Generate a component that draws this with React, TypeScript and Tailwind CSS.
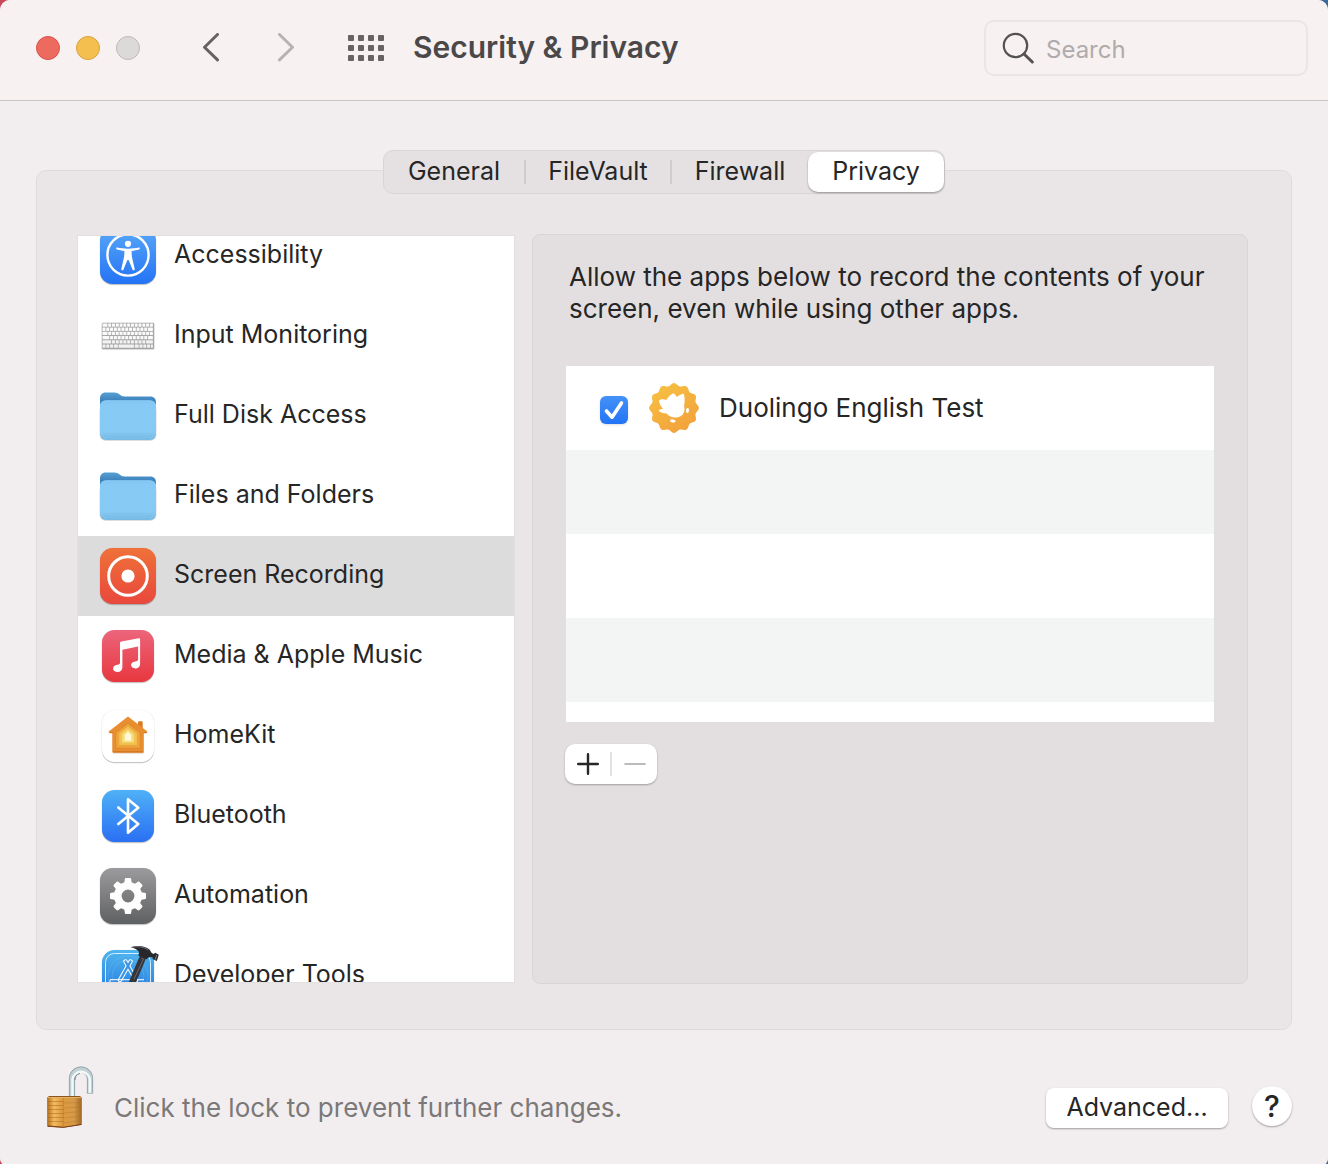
import { ReactNode, useState } from "react";

interface PrivacyItem {
  name: string;
  icon: ReactNode;
}

interface TileProps {
  id: string;
  from: string;
  to: string;
  size?: number;
  children?: ReactNode;
}

// Rounded app tile that most of the sidebar icons sit on
function Tile({ id, from, to, size = 56, children }: TileProps) {
  const offset = (60 - size) / 2;
  return (
    <svg viewBox="0 0 60 60" className="size-15 shrink-0 overflow-visible" aria-hidden="true">
      <defs>
        <linearGradient id={id} x1="0" y1="0" x2="0" y2="1">
          <stop offset="0" stopColor={from} />
          <stop offset="1" stopColor={to} />
        </linearGradient>
      </defs>
      <rect x={offset} y={offset + 1.2} width={size} height={size} rx="12.5" fill="#000" opacity="0.16" />
      <rect x={offset - 0.5} y={offset - 0.2} width={size + 1} height={size + 1} rx="13" fill="#000" opacity="0.09" />
      <rect x={offset} y={offset} width={size} height={size} rx="12.5" fill={`url(#${id})`} />
      {children}
    </svg>
  );
}

function AccessibilityIcon() {
  return (
    <Tile id="accessibility" from="#58a7f8" to="#2473f5">
      <circle cx="30" cy="29" r="20.6" fill="none" stroke="#fff" strokeWidth="2.4" />
      <circle cx="30" cy="17.8" r="3.1" fill="#fff" />
      <path
        d="M19.2 21.6c3 .6 6.400 1.100 10.800 1.100s7.800-.5 10.800-1.100c1.100-.2 1.500 1.600.3 1.900-2.500.7-4.600 1.100-7.400 1.500-.2 3.700.2 6.400 1 9.300l2 8.600c.3 1.500-1.700 2-2.200.6L30.600 34h-1.200l-3.900 9.500c-.5 1.400-2.500.9-2.200-.6l2-8.600c.8-2.900 1.200-5.600 1-9.300-2.800-.4-4.900-.8-7.400-1.500-1.200-.3-.8-2.100.3-1.900z"
        fill="#fff"
      />
    </Tile>
  );
}

const keyRows = [
  [3, 2, 2, 2, 2, 2, 2, 2, 2, 2, 2, 2, 2],
  [2, 2, 2, 2, 2, 2, 2, 2, 2, 2, 2, 2, 3],
  [3, 2, 2, 2, 2, 2, 2, 2, 2, 2, 2, 2, 2],
  [4, 2, 2, 2, 2, 2, 2, 2, 2, 2, 2, 3],
  [5, 2, 2, 2, 2, 2, 2, 2, 2, 2, 4],
  [2, 2, 2, 2.5, 8.5, 2.5, 2, 2, 2, 1.5],
];

function KeyboardIcon() {
  return (
    <svg viewBox="0 0 60 60" className="size-15 shrink-0" aria-hidden="true">
      <rect x="3.5" y="16.5" width="53" height="27.3" rx="1.5" fill="#cfcfcf" />
      <rect x="4" y="17" width="52" height="26" rx="1" fill="#a6a6a6" />
      {keyRows.map((row, r) => {
        const total = row.reduce((sum, w) => sum + w, 0);
        let used = 0;
        return row.map((w, i) => {
          const x = 4.5 + (used / total) * 51.2;
          used += w;
          return (
            <rect
              key={`${r}-${i}`}
              x={x}
              y={17.4 + r * 4.2}
              width={(w / total) * 51.2 - 0.8}
              height="3.3"
              rx="0.4"
              fill={r > 3 ? "#f1f1f1" : "#fafafa"}
            />
          );
        });
      })}
    </svg>
  );
}

function FolderIcon({ id }: { id: string }) {
  return (
    <svg viewBox="0 0 60 60" className="size-15 shrink-0" aria-hidden="true">
      <defs>
        <linearGradient id={`${id}-back`} x1="0" y1="0" x2="0" y2="1">
          <stop offset="0" stopColor="#569fd2" />
          <stop offset="0.25" stopColor="#3d82bd" />
        </linearGradient>
        <linearGradient id={`${id}-front`} x1="0" y1="0" x2="0" y2="1">
          <stop offset="0" stopColor="#7fc4f0" />
          <stop offset="0.12" stopColor="#87caf5" />
          <stop offset="0.8" stopColor="#86c9f3" />
          <stop offset="1" stopColor="#76b9e4" />
        </linearGradient>
      </defs>
      <rect x="1.6" y="18" width="56.8" height="36.8" rx="6" fill="#000" opacity="0.18" />
      <path d="M2 12.5C2 9 4 6.600 7.500 6.600h8.700c2.600 0 4 .9 5.400 2 1.500 1.300 2.700 2 5 2h25.900c3.500 0 5.500 2.400 5.500 5.900V40H2z" fill={`url(#${id}-back)`} />
      <rect x="2" y="14.5" width="56" height="39.5" rx="6" fill={`url(#${id}-front)`} />
      <path d="M2.500 20c0-3.200 2.200-5.200 5.500-5.200h44c3.300 0 5.500 2 5.500 5.200" fill="none" stroke="#a0d7fa" strokeWidth="0.7" />
      <path d="M5 47.500h50M5 49.700h50" stroke="#7cbbe6" strokeWidth="0.5" />
    </svg>
  );
}

function RecordingIcon() {
  return (
    <Tile id="recording" from="#ef7139" to="#e9483c">
      <circle cx="30" cy="30" r="19.3" fill="none" stroke="#fff" strokeWidth="3" />
      <circle cx="30" cy="30" r="6.600" fill="#fff" />
    </Tile>
  );
}

function MusicIcon() {
  return (
    <Tile id="music" from="#ec657b" to="#e8373f" size={52}>
      <path
        d="M22 17.200c0-.9.5-1.400 1.300-1.600l17.500-3.300c.8-.1 1.300.3 1.300 1.100v24.300c0 3.200-2 4.700-4.700 4.700-2.500 0-4.300-1.300-4.300-3.300 0-2.100 1.600-3.200 4.100-3.700 2.100-.4 2.900-.8 2.900-2.200V20.500l-15.700 3.200v17.300c0 3.300-2.100 5-4.900 5-2.500 0-4.400-1.400-4.400-3.500 0-2.200 1.600-3.300 4.200-3.800 2.200-.4 2.700-.8 2.700-2.300z"
        fill="#fff"
      />
    </Tile>
  );
}

function HomeIcon() {
  return (
    <Tile id="home" from="#ffffff" to="#ffffff" size={52}>
      <g strokeLinejoin="round">
        <path d="M14.700 27v20.500h31V27z" fill="#8a5a2a" opacity="0.35" />
        <path d="M40 23v-6.500c0-.8.4-1.200 1.200-1.200h2.300c.8 0 1.200.4 1.200 1.200V25z" fill="#d97c24" />
        <path d="M29 11.200c.7-.6 1.300-.6 2 0L49 25.300c.7.800.2 1.700-.8 1.700h-2.500v18.500c0 .8-.4 1.200-1.200 1.200h-29c-.8 0-1.200-.4-1.200-1.200V27h-2.500c-1 0-1.500-.9-.8-1.700z" fill="#e98d31" />
        <path d="M15 45.800h30M11.500 26.800h3.200M45.500 26.800h3.200" stroke="#c96c1d" strokeWidth="0.8" />
        <path d="M30 17.300l12.300 9.500v15.500H17.700V26.800z" fill="#efa43b" stroke="#d98428" strokeWidth="0.7" />
        <path d="M30 19.800l9.300 7.500v12H20.700v-12z" fill="#f5c04e" stroke="#e3a03a" strokeWidth="0.7" />
        <path d="M30 22.800l6.200 5.200v9H23.800v-9z" fill="#f8dd7c" stroke="#e9bd54" strokeWidth="0.6" />
        <path d="M30 25.800l3.200 3v6h-6.400v-6z" fill="#fff9d9" />
      </g>
    </Tile>
  );
}

function BluetoothIcon() {
  return (
    <Tile id="bluetooth" from="#4fb1f6" to="#2a6ff3" size={52}>
      <path
        d="M20.300 21.500L40.300 38 30 46.700V13.300l10.300 8.400L20.300 38"
        fill="none"
        stroke="#fff"
        strokeWidth="2.6"
        strokeLinecap="round"
        strokeLinejoin="round"
      />
    </Tile>
  );
}

function GearIcon() {
  return (
    <Tile id="gear" from="#9b9b9d" to="#5f6062">
      {[0, 45, 90, 135, 180, 225, 270, 315].map((angle) => (
        <path
          key={angle}
          d="M24.500 18.500c1.300-.7 1.800-1.500 2-3l.3-2.200c.1-.9.600-1.300 1.400-1.300h3.600c.8 0 1.300.4 1.400 1.300l.3 2.200c.2 1.500.7 2.300 2 3z"
          fill="#fff"
          transform={`rotate(${angle} 30 30)`}
        />
      ))}
      <circle cx="30" cy="30" r="10.2" fill="none" stroke="#fff" strokeWidth="7.6" />
    </Tile>
  );
}

function ToolsIcon() {
  return (
    <Tile id="tools" from="#4fb5ee" to="#2072df" size={52}>
      <rect x="7.5" y="7.5" width="45" height="45" rx="9" fill="none" stroke="#d6efff" strokeWidth="1" />
      <g fill="none" stroke="#7cc8f6" strokeWidth="0.5" opacity="0.6">
        <circle cx="30" cy="30" r="20" />
        <circle cx="30" cy="30" r="16" />
      </g>
      <g fill="none" strokeLinecap="round">
        <path d="M32.500 15.500L22 34M27.500 15.500L38 34" stroke="#fff" strokeWidth="4.400" />
        <path d="M32.500 15.500L22 34M27.500 15.500L38 34" stroke="#3b96e6" strokeWidth="2.400" />
      </g>
      <path d="M12 38v-4.300h34" fill="none" stroke="#fff" strokeWidth="1" />
      <path d="M42 9.500l6 2.800L36.500 40 30 38z" fill="#343439" />
      <path d="M43.500 12l2 1L36 33" fill="none" stroke="#6d6d73" strokeWidth="0.9" />
      <path d="M32.700 1.200C40-1.200 47-.2 51.500 3.500l2.200 3.600 2 .8 1.500-1.200 3.600 2-2 6.300-3.900-1.700-.5-2-3.200-.2-2.700 2.200-8-3.500.5-3.800c-1.600-2.700-4.500-4.100-8.300-4.800z" fill="#27272c" />
      <path d="M34.500 1.300c6-1.300 11.800-.3 15.800 2.900" fill="none" stroke="#77777e" strokeWidth="0.9" />
      <path d="M58.700 9l-1.600 4.700" stroke="#8c8c96" strokeWidth="0.9" />
    </Tile>
  );
}

// Twelve-point scalloped outline of the app badge
const badgePoints = Array.from({ length: 180 }, (_, i) => {
  const angle = (i * Math.PI) / 90;
  const radius = 23.6 + 1.3 * Math.cos(angle * 12);
  return `${(25 + radius * Math.sin(angle)).toFixed(2)},${(25 - radius * Math.cos(angle)).toFixed(2)}`;
}).join(" ");

function DuolingoIcon() {
  return (
    <svg viewBox="0 0 50 50" className="size-[50px] shrink-0" aria-hidden="true">
      <defs>
        <linearGradient id="duolingo" x1="0.2" y1="0" x2="0.8" y2="1">
          <stop offset="0" stopColor="#f7c043" />
          <stop offset="1" stopColor="#f2a03b" />
        </linearGradient>
      </defs>
      <polygon points={badgePoints} fill="url(#duolingo)" />
      <path
        d="M11 16.700c2.300-.6 4.300-.5 6.300.2 1.600-2.500 3.600-4.800 6-6.200.9-.5 1.700-.4 2.400.3.900.9 1.600 1.900 2.100 3.100 1.600-1.400 3.400-2.500 5.500-3.200 1-.3 1.700.3 1.900 1.300.6 3.600.7 7.300-.2 10.300.7 2.200.8 4.700-.1 6.900-1.500 3.500-5 5.400-8.800 5.200-3.400-.1-6.400-1.600-8.300-4.200-2.300.3-5.200-.3-7.300-1.900-.8-.6-.7-1.300.1-1.700 1-.5 2.200-.9 3.500-1-1.900-1.800-3.500-4.400-4-7.300-.1-.9.200-1.600.9-1.800z"
        fill="#fff"
      />
      <ellipse cx="38.5" cy="27.5" rx="1.5" ry="2.6" fill="#fff" transform="rotate(8 38.5 27.5)" />
      <ellipse cx="23.8" cy="38" rx="2.7" ry="1.6" fill="#fff" transform="rotate(6 23.8 38)" />
    </svg>
  );
}

function LockIcon() {
  return (
    <svg viewBox="0 0 48 62" className="h-[62px] w-12 shrink-0 overflow-visible" aria-hidden="true">
      <defs>
        <linearGradient id="lock-left" x1="0" y1="0" x2="1" y2="0">
          <stop offset="0" stopColor="#b9731f" />
          <stop offset="0.4" stopColor="#f3bc60" />
          <stop offset="1" stopColor="#d9943a" />
        </linearGradient>
        <linearGradient id="lock-right" x1="0" y1="0" x2="1" y2="0">
          <stop offset="0" stopColor="#dc9a3f" />
          <stop offset="0.6" stopColor="#d69a48" />
          <stop offset="1" stopColor="#a56b29" />
        </linearGradient>
      </defs>
      <g fill="none">
        <path d="M26 30V11.700a9 9 0 0 1 18 0V26.500" stroke="#7f939c" strokeWidth="6.2" />
        <path d="M26 30V11.700a9 9 0 0 1 18 0V26" stroke="#c3d0d5" strokeWidth="4.8" />
        <path d="M26.500 30V12a8.800 8.800 0 0 1 17.300 0V25.800" stroke="#f2f8fa" strokeWidth="2.4" />
        <path d="M29 13a6 6 0 0 1 5-6.500" stroke="#75868e" strokeWidth="1" />
      </g>
      <path d="M1.300 30.500L3 29h31l1.700 1.500v27.300l-18.400 3-16-1.100z" fill="#8f5516" />
      <path d="M1.800 31h15.500v29L2 59z" fill="url(#lock-left)" />
      <path d="M17.300 31h17.800v26.500l-17.800 2.800z" fill="url(#lock-right)" />
      <path d="M2 30.500h33" stroke="#e9bd76" strokeWidth="0.9" />
      <path d="M2 34.500h15.300M2 38.500h15.300M2 42.500h15.300M2 46.500h15.300M2 50.500h15.300M2 54.500h15.300" stroke="#9c5e18" strokeWidth="1" opacity="0.45" />
      <path d="M17.300 36l18-.5M17.300 41l18-1M17.300 46l18-1.400M17.300 51l18-1.800M17.300 56l18-2.500" stroke="#a96c23" strokeWidth="0.8" opacity="0.4" />
      <path d="M2 59l15.300 1.300 18-2.800" fill="none" stroke="#7a3d15" strokeWidth="1" />
    </svg>
  );
}

const items: PrivacyItem[] = [
  { name: "Accessibility", icon: <AccessibilityIcon /> },
  { name: "Input Monitoring", icon: <KeyboardIcon /> },
  { name: "Full Disk Access", icon: <FolderIcon id="disk" /> },
  { name: "Files and Folders", icon: <FolderIcon id="files" /> },
  { name: "Screen Recording", icon: <RecordingIcon /> },
  { name: "Media & Apple Music", icon: <MusicIcon /> },
  { name: "HomeKit", icon: <HomeIcon /> },
  { name: "Bluetooth", icon: <BluetoothIcon /> },
  { name: "Automation", icon: <GearIcon /> },
  { name: "Developer Tools", icon: <ToolsIcon /> },
];

const tabs = [
  { name: "General", width: "w-[142px]", divider: true },
  { name: "FileVault", width: "w-[146px]", divider: true },
  { name: "Firewall", width: "w-[136px]", divider: false },
];

function Toolbar() {
  return (
    <header className="flex h-[101px] items-center border-b border-[#cbc6c7] bg-[#f7f1f1] pr-5 pb-1 pl-9">
      <div className="flex gap-4">
        <button aria-label="Close" className="size-6 rounded-full border border-[#d9544b] bg-[#ed6a5e]" />
        <button aria-label="Minimize" className="size-6 rounded-full border border-[#d9a23a] bg-[#f5bf4f]" />
        <button aria-label="Zoom" className="size-6 rounded-full border border-[#bfbbbb] bg-[#dcd9d9]" />
      </div>
      <div className="ml-15 flex gap-13">
        <button aria-label="Back">
          <svg viewBox="0 0 24 30" className="h-[30px] w-6" fill="none" stroke="#676263" strokeWidth="3" strokeLinecap="round" strokeLinejoin="round">
            <path d="M17.500 1.500L4.500 14.200l13 12.700" />
          </svg>
        </button>
        <button aria-label="Forward">
          <svg viewBox="0 0 24 30" className="h-[30px] w-6" fill="none" stroke="#b8b2b3" strokeWidth="3" strokeLinecap="round" strokeLinejoin="round">
            <path d="M3.500 1.500l13 12.700-13 12.700" />
          </svg>
        </button>
      </div>
      <button aria-label="Show All" className="ml-12 grid grid-cols-4 gap-1">
        {Array.from({ length: 12 }, (_, i) => (
          <span key={i} className="size-1.5 rounded-[1px] bg-[#676263]" />
        ))}
      </button>
      <h1 className="ml-[29px] pb-0.5 text-[30px] leading-9 font-semibold text-[#4b4849]">Security &amp; Privacy</h1>
      <label className="ml-auto flex h-14 w-[324px] items-center gap-3 rounded-[10px] border-2 border-[#ebe5e5] px-4">
        <svg viewBox="0 0 32 32" className="size-8 shrink-0" fill="none" stroke="#545152" strokeLinecap="round" aria-hidden="true">
          <circle cx="13.500" cy="13.500" r="11.700" strokeWidth="2.2" />
          <path d="M22 22l8.300 8" strokeWidth="3" />
        </svg>
        <input
          type="text"
          aria-label="Search"
          placeholder="Search"
          className="w-full min-w-0 bg-transparent pt-1 text-2xl text-[#262626] outline-none placeholder:text-[#b0abac]"
        />
      </label>
    </header>
  );
}

function Sidebar() {
  return (
    <nav className="h-[748px] w-[438px] shrink-0 overflow-hidden border border-[#e3e0e1] bg-white">
      <ul className="-mt-5">
        {items.map((item) => (
          <li key={item.name}>
            <button
              className={`flex h-20 w-full items-center gap-4 pl-5 text-left ${
                item.name === "Screen Recording" ? "bg-[#dcdcdc]" : ""
              }`}
            >
              {item.icon}
              <span className="pb-1">{item.name}</span>
            </button>
          </li>
        ))}
      </ul>
    </nav>
  );
}

function AppList() {
  const [allowed, setAllowed] = useState(true);

  return (
    <section className="h-[750px] grow rounded-lg border border-[#d9d5d6] bg-[#e3dfe0] px-8 text-[26px]">
      <p className="px-1 pt-[26px] leading-8 whitespace-nowrap">
        Allow the apps below to record the contents of your
        <br />
        screen, even while using other apps.
      </p>
      <ul className="mt-10 h-[358px] overflow-hidden border border-[#e1dfdf] bg-white">
        <li className="flex h-21 items-center pl-[34px]">
          <label className="flex items-center">
            <span className="relative mt-1 mr-[21px] flex size-7">
              <input
                type="checkbox"
                checked={allowed}
                onChange={(e) => setAllowed(e.target.checked)}
                className="peer size-7 appearance-none rounded-md border border-[#c4c4c4] bg-white shadow-sm checked:border-0 checked:bg-linear-to-b checked:from-[#4391f8] checked:to-[#2473f5]"
              />
              <svg viewBox="0 0 28 28" className="pointer-events-none absolute inset-0 hidden peer-checked:block" fill="none" stroke="#fff" strokeWidth="3.600" strokeLinecap="round" strokeLinejoin="round">
                <path d="M6.500 15l5.500 6.200L21.500 7" />
              </svg>
            </span>
            <DuolingoIcon />
            <span className="ml-5">Duolingo English Test</span>
          </label>
        </li>
        <li className="h-21 bg-[#f3f5f4]" />
        <li className="h-21" />
        <li className="h-21 bg-[#f3f5f4]" />
      </ul>
      <div className="mt-[21px] flex h-10 w-[92px] items-center rounded-[10px] bg-white shadow-[0_1px_2px_rgba(0,0,0,0.3)]">
        <button aria-label="Add" className="flex grow justify-center">
          <svg viewBox="0 0 22 22" className="size-[22px]" stroke="#262626" strokeWidth="2.4" strokeLinecap="round">
            <path d="M11 1.200v19.600M1.200 11h19.600" />
          </svg>
        </button>
        <span className="h-6 w-0.5 bg-[#e3e1e2]" />
        <button aria-label="Remove" className="flex grow justify-center">
          <svg viewBox="0 0 22 22" className="size-[22px]" stroke="#bdbabb" strokeWidth="2" strokeLinecap="round">
            <path d="M1.200 11h19.600" />
          </svg>
        </button>
      </div>
    </section>
  );
}

export default function App() {
  return (
    <div className="bg-linear-to-r from-[#c9485a] to-[#3a6a98]">
      <div className="overflow-hidden rounded-t-[10px] rounded-b-md bg-[#f2eeef] font-[Inter,sans-serif] text-[25px] leading-8 text-[#262626]">
        <Toolbar />

        <main className="px-9 pt-[49px]">
          <div role="tablist" className="relative z-10 mx-auto -mb-6 flex h-11 w-fit items-center rounded-[10px] border border-[#d9d5d6] bg-[#e5e1e2]">
            {tabs.map((tab) => (
              <button key={tab.name} role="tab" aria-selected={false} className={`flex items-center ${tab.width}`}>
                <span className="grow pb-0.5">{tab.name}</span>
                {tab.divider && <span className="h-6 w-0.5 bg-[#d0cccd]" />}
              </button>
            ))}
            <button role="tab" aria-selected={true} className="h-10 w-[136px] rounded-[10px] bg-white pb-0.5 shadow-[0_1px_2px_rgba(0,0,0,0.35)]">
              Privacy
            </button>
          </div>

          <div className="flex items-center gap-[17px] rounded-[10px] border border-[#dfdbdc] bg-[#eae6e7] pt-[63px] pr-[43px] pb-[45px] pl-10">
            <Sidebar />
            <AppList />
          </div>
        </main>

        <footer className="flex items-center px-9 pt-[37px] pb-9">
          <button aria-label="Lock" className="ml-2.5">
            <LockIcon />
          </button>
          <p className="mt-5 ml-5 text-[26px] text-[#7b7879]">Click the lock to prevent further changes.</p>
          <button className="mt-5 ml-auto h-10 w-[182px] rounded-lg bg-white pb-0.5 shadow-[0_1px_2px_rgba(0,0,0,0.35)]">
            Advanced...
          </button>
          <button aria-label="Help" className="mt-4 ml-6 flex size-10 items-center justify-center rounded-full bg-white text-[30px] font-medium shadow-[0_1px_2px_rgba(0,0,0,0.35)]">
            ?
          </button>
        </footer>
      </div>
    </div>
  );
}
